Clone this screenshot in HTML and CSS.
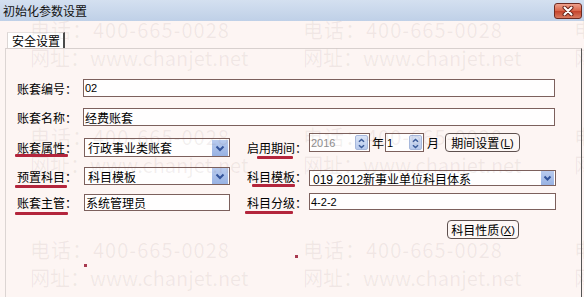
FILE: index.html
```html
<!DOCTYPE html>
<html lang="zh-CN">
<head>
    <meta charset="UTF-8">
    <title>初始化参数设置</title>
    <link rel="stylesheet" href="styles.css">
</head>
<body>
<div class="window">
    <div class="titlebar">
        <span class="title">初始化参数设置</span>
        <span class="close">
            <svg width="14" height="10" viewBox="0 0 14 10"><path d="M3.5 1.5 L10.5 8.5 M10.5 1.5 L3.5 8.5" stroke="#6a261c" stroke-width="4" stroke-linecap="round"/><path d="M3.5 1.5 L10.5 8.5 M10.5 1.5 L3.5 8.5" stroke="#fff" stroke-width="2" stroke-linecap="round"/></svg>
        </span>
    </div>

    <div class="tabs"><span class="tab">安全设置</span></div>

    <div class="panel">
        <div class="row r1">
            <span class="lbl">账套编号：</span>
            <span class="field full small">02</span>
        </div>
        <div class="row r2">
            <span class="lbl">账套名称：</span>
            <span class="field full">经费账套</span>
        </div>

        <div class="row r3">
            <div class="cell-l">
                <span class="lbl end">账套属性：<i class="mark m-l3"></i></span>
                <span class="field select tall bottom">行政事业类账套
                    <span class="dd"><svg width="16" height="16" viewBox="0 0 16 16"><path d="M4.5 6.5 L8 10 L11.5 6.5" stroke="#33539a" stroke-width="2" fill="none"/></svg></span>
                </span>
            </div>
            <div class="cell-r">
                <span class="lbl end">启用期间：<i class="mark m-r3"></i></span>
                <div class="spingroup">
                    <span class="spin w1"><span class="val dim">2016</span>
                        <span class="spinbtn"><svg width="13" height="15" viewBox="0 0 13 15"><path d="M3.5 5.5 L6.5 2.8 L9.5 5.5 M3.5 9.5 L6.5 12.2 L9.5 9.5" stroke="#3a5a98" stroke-width="1.8" fill="none"/></svg></span>
                    </span>
                    <span class="unit">年</span>
                    <span class="spin w2"><span class="val">1</span>
                        <span class="spinbtn"><svg width="13" height="15" viewBox="0 0 13 15"><path d="M3.5 5.5 L6.5 2.8 L9.5 5.5 M3.5 9.5 L6.5 12.2 L9.5 9.5" stroke="#3a5a98" stroke-width="1.8" fill="none"/></svg></span>
                    </span>
                    <span class="unit u2">月</span>
                    <span class="btn b1">期间设置<span class="acc">(<u>L</u>)</span></span>
                </div>
            </div>
        </div>

        <div class="row r4">
            <div class="cell-l">
                <span class="lbl">预置科目：<i class="mark m-l4"></i></span>
                <span class="field select top">科目模板
                    <span class="dd"><svg width="16" height="16" viewBox="0 0 16 16"><path d="M4.5 6.5 L8 10 L11.5 6.5" stroke="#33539a" stroke-width="2" fill="none"/></svg></span>
                </span>
            </div>
            <div class="cell-r">
                <span class="lbl">科目模板：<i class="mark m-r4"></i></span>
                <span class="field select wide short bottom">019 2012新事业单位科目体系
                    <span class="dd sm"><svg width="13" height="14" viewBox="0 0 13 14"><path d="M3.5 5.5 L6.5 8.5 L9.5 5.5" stroke="#33539a" stroke-width="2" fill="none"/></svg></span>
                </span>
            </div>
        </div>

        <div class="row r5">
            <div class="cell-l">
                <span class="lbl">账套主管：<i class="mark m-l5"></i></span>
                <span class="field ctrl">系统管理员</span>
            </div>
            <div class="cell-r">
                <span class="lbl">科目分级：<i class="mark m-r5"></i></span>
                <span class="field wide small">4-2-2</span>
            </div>
        </div>

        <div class="row r6">
            <span class="btn b2">科目性质<span class="acc">(<u>X</u>)</span></span>
        </div>
    </div>

    <div class="watermark">
        <div class="wm wm1"><p class="tel">电话：400-665-0028</p><p>网址：www.chanjet.net</p></div>
        <div class="wm wm2"><p class="tel">电话：400-665-0028</p><p>网址：www.chanjet.net</p></div>
        <div class="wm wm3"><p class="tel">电话：400-665-0028</p><p>网址：www.chanjet.net</p></div>
        <div class="wm wm4"><p class="tel">电话：400-665-0028</p><p>网址：www.chanjet.net</p></div>
        <div class="wm wm5"><p class="tel">电话：400-665-0028</p><p>网址：www.chanjet.net</p></div>
        <div class="wm wm6"><p class="tel">电话：400-665-0028</p><p>网址：www.chanjet.net</p></div>
        <div class="wm wm7"><p class="tel">电话：400-665-0028</p><p>网址：www.chanjet.net</p></div>
        <div class="wm wm8"><p class="tel">电话：400-665-0028</p><p>网址：www.chanjet.net</p></div>
        <div class="wm wm9"><p class="tel">电话：400-665-0028</p><p>网址：www.chanjet.net</p></div>
    </div>
    <i class="dot d1"></i>
    <i class="dot d2"></i>
</div>
</body>
</html>
```

FILE: styles.css
```css
* { box-sizing: border-box; }
body { margin: 0; width: 584px; height: 297px; overflow: hidden; background: #fdf5f3; color: #000; font-family: "Noto Sans CJK SC", sans-serif; font-size: 12px; }
.window { position: relative; width: 584px; height: 297px; overflow: hidden; }

.titlebar { height: 21px; display: flex; align-items: center; justify-content: space-between; padding: 0 2px 0 3px; background: linear-gradient(#d4e0f0, #bfd0e7); }
.title { font-size: 12px; line-height: 21px; color: #111; }
.close { width: 28px; height: 16px; display: flex; align-items: center; justify-content: center; border: 1px solid #6e2b22; border-radius: 3px; background: linear-gradient(#eea18d 0%, #d9664b 48%, #c5442c 52%, #d97a60 100%); }

.tabs { height: 27px; padding: 11px 0 0 7px; }
.tab { display: inline-block; width: 58px; height: 16px; padding-left: 4px; line-height: 15px; background: #fff; border-top: 1px solid #e6e0de; border-left: 1px solid #dcd6d4; border-right: 2px solid #4a4a4a; }

.panel { margin-left: 5px; width: 577px; height: 249px; padding-left: 11px; border-top: 1px solid #d8d0ce; border-left: 1px solid #dcd5d3; border-right: 1px solid #555; }

.row { display: flex; }
.r1 { margin-top: 30px; height: 18px; }
.r2 { margin-top: 11px; height: 18px; }
.r3 { margin-top: 7px; height: 24px; }
.r4 { margin-top: 10px; height: 19px; }
.r5 { margin-top: 7px; height: 18px; }
.r6 { margin-top: 9px; height: 19px; padding-left: 430px; }

.cell-l { display: flex; width: 213px; }
.cell-r { display: flex; margin-left: 17px; }

.lbl { position: relative; display: flex; align-items: center; width: 66px; line-height: 19px; white-space: nowrap; }
.cell-l .lbl { width: 67px; }
.cell-r .lbl { width: 62px; }
.lbl.end { align-items: flex-end; }

.field { display: flex; align-items: center; height: 100%; padding-left: 1px; background: #fffefe; border: 1px solid #7c605c; font-family: "Liberation Sans", "Noto Sans CJK SC", sans-serif; font-size: 12px; white-space: nowrap; }
.field.full { width: 472px; }
.field.small { font-size: 11px; }
.field.ctrl { width: 146px; height: 17px; align-self: flex-end; }
.field.wide { width: 247px; }
.select { width: 146px; justify-content: space-between; padding: 0 1px 0 3px; }
.select.tall { height: 19px; }
.select.top { height: 18px; align-self: flex-start; }
.select.short { height: 16px; }
.bottom { align-self: flex-end; }
.r5 .field.wide { height: 17px; align-self: flex-start; }

.dd { display: flex; width: 16px; height: 16px; background: linear-gradient(#b9cbee, #98b2e3); }
.dd.sm { width: 13px; height: 14px; }

.spingroup { display: flex; align-items: center; height: 19px; align-self: flex-start; }
.spin { display: flex; align-items: center; justify-content: space-between; height: 19px; padding: 0 1px 0 1px; background: #fffefe; border: 1px solid #7c605c; font-family: "Liberation Sans", sans-serif; font-size: 11px; }
.spin.w1 { width: 61px; }
.spin.w2 { width: 39px; }
.val.dim { color: #8e8e8e; }
.spinbtn { display: flex; width: 13px; height: 15px; background: linear-gradient(#dbe5f7, #b7c9ec); border: 1px solid #a7b8dc; border-radius: 2px; }
.unit { margin: 0 1px 0 2px; }
.unit.u2 { margin: 0 0 0 3px; }

.btn { display: flex; align-items: center; justify-content: center; height: 19px; background: #fdf7f5; border: 1px solid #5e504e; border-radius: 4px; white-space: nowrap; }
.btn.b1 { width: 75px; margin-left: 6px; }
.btn.b2 { width: 72px; }
.acc { font-family: "Liberation Sans", sans-serif; font-size: 11px; margin-left: 1px; }

.mark { position: absolute; height: 3px; border-radius: 1px; background: #b3253c; }
.m-l3 { left: -2px; width: 53px; bottom: 0; }
.m-l4 { left: -2px; width: 52px; bottom: -2px; }
.m-l5 { left: -2px; width: 53px; bottom: -4px; }
.m-r3 { left: 10px; width: 36px; bottom: -2px; }
.m-r4 { left: 5px; width: 43px; bottom: -1px; }
.m-r5 { left: -2px; width: 48px; bottom: -3px; }

.watermark { position: absolute; left: 0; top: 0; width: 584px; height: 297px; pointer-events: none; }
.wm { position: absolute; white-space: nowrap; font-family: "Noto Sans CJK SC", sans-serif; font-size: 20px; line-height: 28px; color: rgba(120, 90, 90, 0.09); }
.wm p { margin: 0; }
.wm .tel { letter-spacing: 1px; }
.wm1, .wm4, .wm7 { left: 30px; }
.wm2, .wm5, .wm8 { left: 303px; }
.wm3, .wm6, .wm9 { left: 574px; }
.wm1, .wm2, .wm3 { top: 16px; }
.wm4, .wm5, .wm6 { top: 123px; }
.wm7, .wm8, .wm9 { top: 236px; }

.dot { position: absolute; width: 3px; height: 3px; background: #a83a50; }
.d1 { left: 84px; top: 264px; }
.d2 { left: 295px; top: 255px; }
```
